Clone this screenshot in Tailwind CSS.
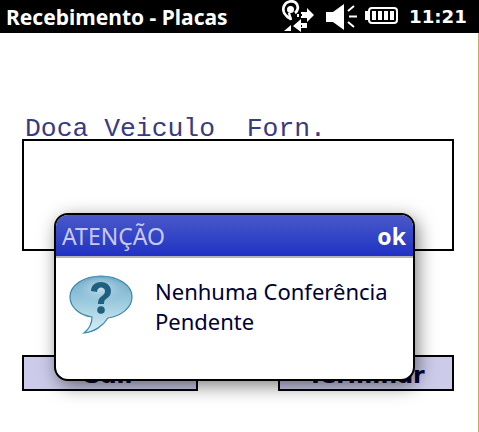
<!DOCTYPE html>
<html>
<head>
<meta charset="utf-8">
<script src="https://cdn.jsdelivr.net/npm/@tailwindcss/browser@4"></script>
</head>
<body class="bg-white">
<div class="relative w-[479px] h-[432px] overflow-hidden bg-white font-['Noto_Sans',sans-serif]">
  <header class="h-[33px] bg-black flex items-center text-white font-bold">
    <span class="ml-[6px] text-[21px] leading-[30px] whitespace-nowrap">Recebimento - Placas</span>
    <svg class="ml-auto shrink-0" width="33" height="33" viewBox="0 0 33 33" fill="none">
      <path d="M9 19C3 16 0 11 2 6C4 1 11 0 14 3C17 6 16 11 13 13" stroke="#fff" stroke-width="2.800"/>
      <circle cx="8.500" cy="9.500" r="3.500" fill="#fff"/>
      <path d="M7 13l2 7" stroke="#fff" stroke-width="2.500"/>
      <path d="M15 14h2v3h-2zM19 12h6v-4l7 7-7 7v-4h-6z" fill="#fff"/>
      <path d="M19 14h1v2h-1z" fill="#000"/>
      <path d="M25 24h-6v-4l-8 7 8 6v-4h6z" fill="#fff" transform="translate(0 -1)"/>
      <path d="M19 25h1v2h-1z" fill="#000"/>
      <path d="M2 31l7-6v6z" fill="#fff"/>
    </svg>
    <svg class="ml-[10px] shrink-0" width="32" height="33" viewBox="0 0 32 33" fill="none">
      <path d="M1 12h7l11-8v26l-11-8h-7z" fill="#fff"/>
      <path d="M23 11l6-5M24 16.500h8M23 22l6 5" stroke="#fff" stroke-width="2"/>
    </svg>
    <svg class="ml-[8px] shrink-0" width="33" height="33" viewBox="0 0 33 33" fill="none" shape-rendering="crispEdges">
      <path d="M0 11h3v9h-3z" fill="#fff"/>
      <rect x="4" y="8" width="28" height="15" rx="3" stroke="#fff" stroke-width="2" shape-rendering="auto"/>
      <path d="M7 11h4v9h-4zM13 11h4v9h-4zM19 11h4v9h-4zM25 11h4v9h-4z" fill="#fff"/>
    </svg>
    <span class="ml-[11px] mr-[12px] w-[58px] text-[18.2px] leading-[30px] font-['DejaVu_Sans',sans-serif] whitespace-nowrap">11:21</span>
  </header>

  <main class="h-[399px] border-r border-[#c8a868] pl-[22px]">
    <p class="pt-[85px] pl-[3px] h-[106px] font-['Liberation_Mono',monospace] text-[26.4px] leading-[23px] text-[#3a3a80] whitespace-pre">Doca Veiculo  Forn.</p>
    <div class="w-[432px] h-[112px] border-2 border-black"></div>
    <div class="mt-[104px] w-[432px] flex justify-between">
      <button class="w-[176px] h-[36px] pt-[3px] border-2 border-black bg-[#ccccea] text-[#000033] font-bold font-['DejaVu_Sans',sans-serif] text-[23.500px] leading-[28px]">Sair</button>
      <button class="w-[176px] h-[36px] pt-[3px] border-2 border-black bg-[#ccccea] text-[#000033] font-bold font-['DejaVu_Sans',sans-serif] text-[23.500px] leading-[28px]">Terminar</button>
    </div>
  </main>

  <section class="absolute left-[54px] top-[213px] w-[361px] h-[168px] rounded-[14px] border-2 border-black bg-white overflow-hidden shadow-[3px_5px_18px_rgba(0,0,0,0.5)] z-10">
    <div class="h-[43px] bg-gradient-to-b from-[#4a58c8] to-[#2030c4] bg-clip-padding border-b-2 border-[#b4b4b4] flex items-center justify-between pl-[6px] pr-[7px]">
      <span class="text-[23px] leading-[30px] text-[#c8c8f0]">ATENÇÃO</span>
      <span class="text-[23px] leading-[30px] font-bold text-white">ok</span>
    </div>
    <div class="flex pl-[13px] pt-[17px]">
      <svg class="shrink-0" width="64" height="60" viewBox="0 0 64 60">
        <defs>
          <linearGradient id="bub" x1="0" y1="0" x2="0" y2="1">
            <stop offset="0" stop-color="#6fa8c8"/>
            <stop offset="0.5" stop-color="#a0cde0"/>
            <stop offset="1" stop-color="#d8f0f6"/>
          </linearGradient>
          <radialGradient id="glow" cx="0.5" cy="0.35" r="0.55">
            <stop offset="0" stop-color="#cfe6f0" stop-opacity="0.9"/>
            <stop offset="1" stop-color="#8fc0d8" stop-opacity="0"/>
          </radialGradient>
        </defs>
        <path d="M32 1C15 1 1 10 1 22C1 32 10 40 23 42C23 49 20 54 15 58C25 57 34 51 39 43C52 41 63 33 63 22C63 10 49 1 32 1Z" fill="url(#bub)" stroke="#3d86a8" stroke-width="1.200"/>
        <ellipse cx="32" cy="18" rx="26" ry="15" fill="url(#glow)"/>
        <path d="M22 16C22 10 27 7 32 7C38 7 42 11 42 16C42 20 40 22 37 24C35 25.500 35 27 35 29H29C29 25 30 23 33 21C35 19.500 36 18 36 16C36 14 34 12.500 32 12.500C30 12.500 28 14 28 17Z" fill="#1f5f80"/>
        <circle cx="32" cy="35" r="3.800" fill="#1f5f80"/>
      </svg>
      <p class="ml-[22px] mt-[1px] text-[22px] leading-[30px] text-[#000033] font-['Noto_Sans',sans-serif]">Nenhuma Conferência<br>Pendente</p>
    </div>
  </section>
</div>
</body>
</html>
